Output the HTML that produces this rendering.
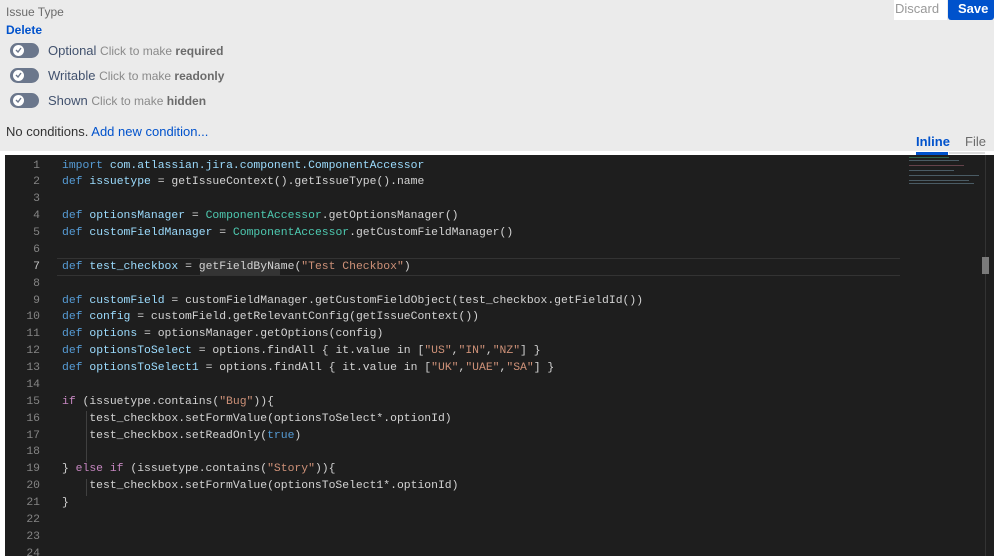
<!DOCTYPE html>
<html><head><meta charset="utf-8"><style>
body{margin:0;width:999px;height:556px;background:#fff;overflow:hidden;font-family:"Liberation Sans",sans-serif;position:relative}
.panel{position:absolute;left:0;top:0;width:994px;height:151px;background:#ebebeb}
.t{position:absolute;white-space:nowrap}
.tog{position:absolute;left:10px;width:29px;height:15px;border-radius:8px;background:#6b778c}
.tog:after{content:"";position:absolute;left:3px;top:2px;width:11px;height:11px;border-radius:50%;background:#fff}
.tog svg{position:absolute;left:5px;top:4px;z-index:2}
.ed{position:absolute;left:5px;top:155px;width:989px;height:401px;background:#1e1e1e}
.ln{position:absolute;left:0;width:35px;text-align:right;color:#858585;font:11.4px "Liberation Mono",monospace}
.cd{position:absolute;left:57px;color:#d4d4d4;font:11.4px "Liberation Mono",monospace;white-space:pre}
.k{color:#569cd6}.v{color:#9cdcfe}.g{color:#4ec9b0}.s{color:#ce9178}.p{color:#c586c0}
</style></head><body>
<div class="panel"></div>
<div class="t" style="left:6px;top:5px;font-size:12px;color:#6b6b6b">Issue Type</div>
<div class="t" style="left:6px;top:23px;font-size:12px;color:#0052cc;font-weight:bold">Delete</div>
<div class="tog" style="top:43px"><svg width="7" height="6" viewBox="0 0 7 6"><path d="M1 3l2 2 3-4" stroke="#6b778c" stroke-width="1.4" fill="none"/></svg></div>
<div class="tog" style="top:68px"><svg width="7" height="6" viewBox="0 0 7 6"><path d="M1 3l2 2 3-4" stroke="#6b778c" stroke-width="1.4" fill="none"/></svg></div>
<div class="tog" style="top:93px"><svg width="7" height="6" viewBox="0 0 7 6"><path d="M1 3l2 2 3-4" stroke="#6b778c" stroke-width="1.4" fill="none"/></svg></div>
<div class="t" style="left:48px;top:43px;font-size:13px;color:#42526e">Optional <span style="color:#8a8a8a;font-size:12px">Click to make <b style="color:#6b6b6b">required</b></span></div>
<div class="t" style="left:48px;top:68px;font-size:13px;color:#42526e">Writable <span style="color:#8a8a8a;font-size:12px">Click to make <b style="color:#6b6b6b">readonly</b></span></div>
<div class="t" style="left:48px;top:93px;font-size:13px;color:#42526e">Shown <span style="color:#8a8a8a;font-size:12px">Click to make <b style="color:#6b6b6b">hidden</b></span></div>
<div class="t" style="left:6px;top:124px;font-size:13px;color:#333">No conditions. <span style="color:#0052cc">Add new condition...</span></div>
<div style="position:absolute;left:894px;top:0;width:53px;height:20px;background:#fff"></div>
<div class="t" style="left:895px;top:1px;font-size:13px;color:#999">Discard</div>
<div style="position:absolute;left:948px;top:0;width:46px;height:20px;background:#0052cc;border-radius:0 0 3px 3px"></div>
<div class="t" style="left:958px;top:1px;font-size:13px;color:#fff;font-weight:bold">Save</div>
<div class="t" style="left:916px;top:134px;font-size:13px;color:#0052cc;font-weight:bold">Inline</div>
<div class="t" style="left:965px;top:134px;font-size:13px;color:#6b6b6b">File</div>
<div style="position:absolute;left:916px;top:152px;width:32px;height:3px;background:#0052cc"></div>
<div style="position:absolute;left:949px;top:152px;width:36px;height:2px;background:#ddd"></div>
<div class="ed">
<div style="position:absolute;left:52px;top:103px;width:843px;height:16px;border-top:1px solid #333;border-bottom:1px solid #333"></div>
<div style="position:absolute;left:195px;top:104px;width:80px;height:16px;background:#343434"></div>
<div style="position:absolute;left:81px;top:256px;width:1px;height:51px;background:#404040"></div>
<div style="position:absolute;left:81px;top:324px;width:1px;height:17px;background:#404040"></div>
<div style="position:absolute;left:900px;top:0;width:80px;height:35px;opacity:.5">
<div style="margin:2px 4px;height:1px;background:#4a7;width:40px"></div><div style="margin:2px 4px;height:1px;background:#79a;width:50px"></div><div style="margin:4px 4px;height:1px;background:#a67;width:55px"></div><div style="margin:2px 4px;height:1px;background:#79a;width:45px"></div><div style="margin:4px 4px;height:1px;background:#79a;width:70px"></div><div style="margin:2px 4px;height:1px;background:#79a;width:60px"></div><div style="margin:2px 4px;height:1px;background:#79a;width:65px"></div>
</div>
<div style="position:absolute;left:980px;top:0;width:1px;height:401px;background:#333"></div>
<div style="position:absolute;left:977px;top:102px;width:7px;height:17px;background:#7a7a7a"></div>
<div id="c"></div>
</div>
<script>
var L=[
'<span class="k">import</span> <span class="v">com.atlassian.jira.component.ComponentAccessor</span>',
'<span class="k">def</span> <span class="v">issuetype</span> = getIssueContext().getIssueType().name',
'',
'<span class="k">def</span> <span class="v">optionsManager</span> = <span class="g">ComponentAccessor</span>.getOptionsManager()',
'<span class="k">def</span> <span class="v">customFieldManager</span> = <span class="g">ComponentAccessor</span>.getCustomFieldManager()',
'',
'<span class="k">def</span> <span class="v">test_checkbox</span> = getFieldByName(<span class="s">"Test Checkbox"</span>)',
'',
'<span class="k">def</span> <span class="v">customField</span> = customFieldManager.getCustomFieldObject(test_checkbox.getFieldId())',
'<span class="k">def</span> <span class="v">config</span> = customField.getRelevantConfig(getIssueContext())',
'<span class="k">def</span> <span class="v">options</span> = optionsManager.getOptions(config)',
'<span class="k">def</span> <span class="v">optionsToSelect</span> = options.findAll { it.value in [<span class="s">"US"</span>,<span class="s">"IN"</span>,<span class="s">"NZ"</span>] }',
'<span class="k">def</span> <span class="v">optionsToSelect1</span> = options.findAll { it.value in [<span class="s">"UK"</span>,<span class="s">"UAE"</span>,<span class="s">"SA"</span>] }',
'',
'<span class="p">if</span> (issuetype.contains(<span class="s">"Bug"</span>)){',
'    test_checkbox.setFormValue(optionsToSelect*.optionId)',
'    test_checkbox.setReadOnly(<span class="k">true</span>)',
'',
'} <span class="p">else if</span> (issuetype.contains(<span class="s">"Story"</span>)){',
'    test_checkbox.setFormValue(optionsToSelect1*.optionId)',
'}','','',''];
var h='';for(var i=0;i<L.length;i++){var y=4.5+i*16.88;h+='<div class="ln" style="top:'+y+'px'+(i==6?';color:#c6c6c6':'')+'">'+(i+1)+'</div><div class="cd" style="top:'+y+'px">'+L[i]+'</div>';}
document.getElementById('c').innerHTML=h;
</script>
</body></html>
